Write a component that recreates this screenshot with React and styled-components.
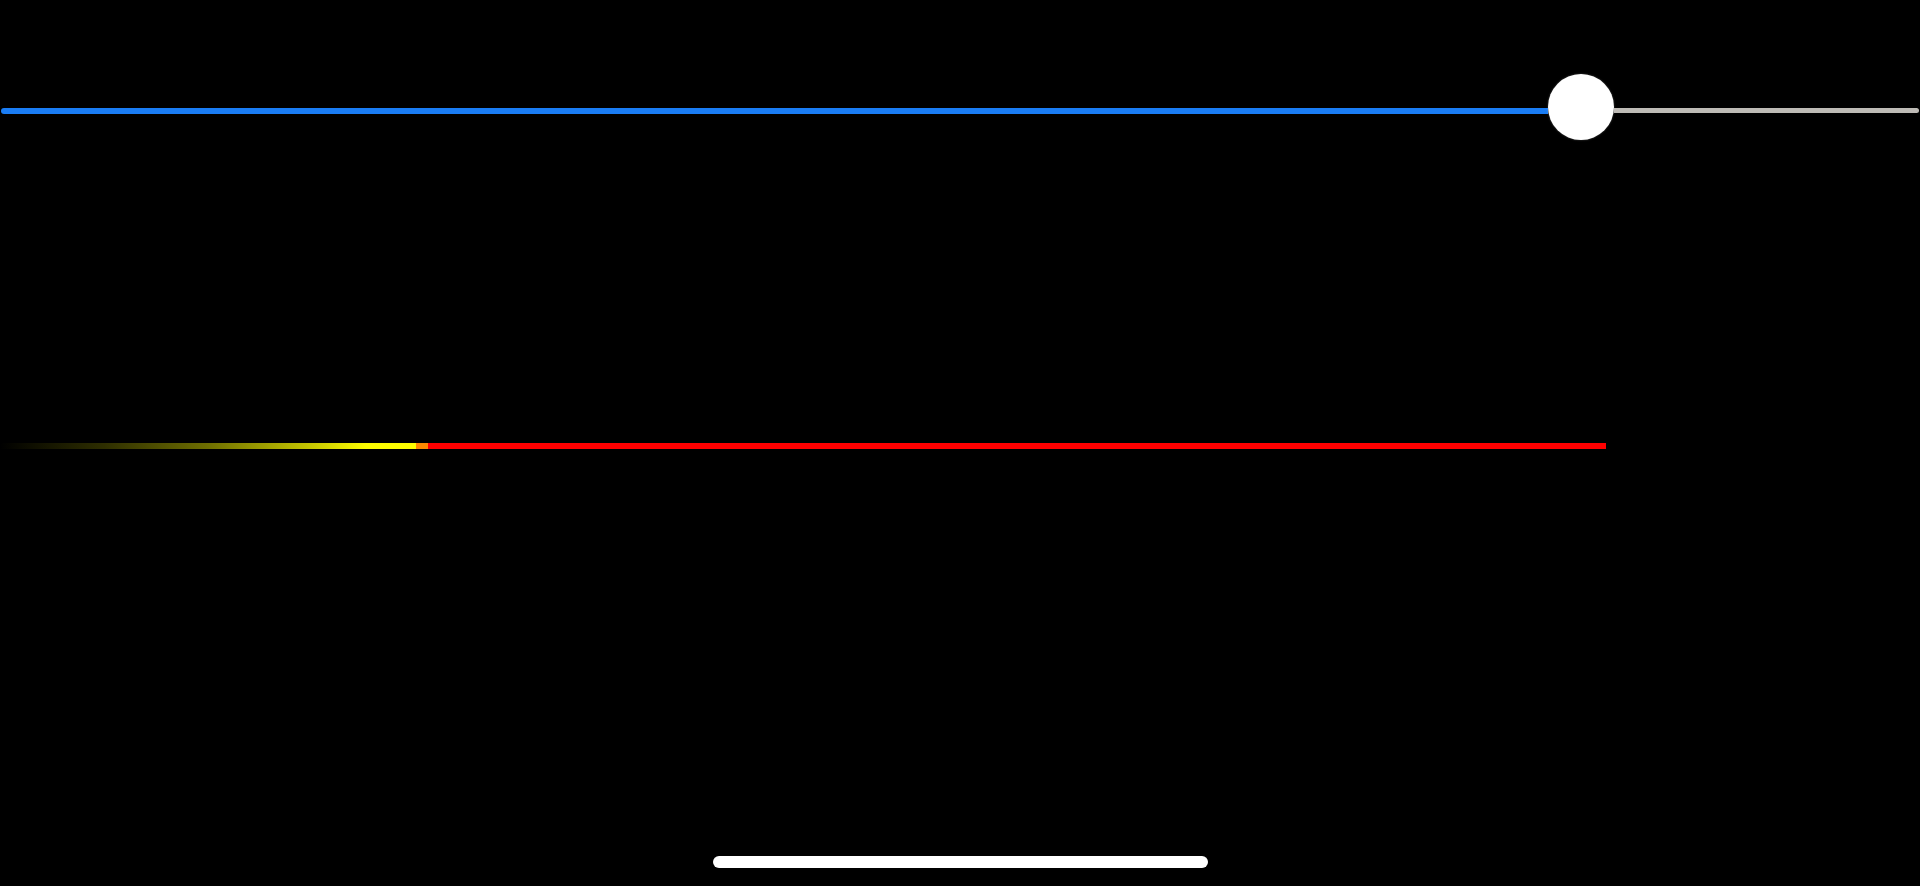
import React from 'react';
import styled, { createGlobalStyle } from 'styled-components';

const GlobalStyle = createGlobalStyle`
  html, body {
    margin: 0;
    padding: 0;
    background: #000000;
    font-family: 'Liberation Sans', Arial, sans-serif;
  }
`;

const s = {
  Page: styled.div`
    display: flex;
    flex-direction: column;
    height: 886px;
    width: 1920px;
    padding: 74px 0 18px;
    box-sizing: border-box;
    background: #000000;
    overflow: hidden;
  `,
  SliderRow: styled.div`
    display: flex;
    align-items: flex-start;
    height: 67px;
    padding-left: 1px;
    padding-right: 1px;
  `,
  Filled: styled.div`
    height: 6px;
    margin-top: 34px;
    background: #1a7df5;
    border-radius: 3px 0 0 3px;
    flex-shrink: 0;
  `,
  Thumb: styled.div`
    width: 66px;
    height: 66px;
    border-radius: 50%;
    background: #ffffff;
    flex-shrink: 0;
    box-shadow: 0 0 2px rgba(255, 255, 255, 0.3);
  `,
  Remaining: styled.div`
    flex: 1;
    height: 5px;
    margin-top: 34px;
    background: #bebbb6;
    border-radius: 0 3px 3px 0;
  `,
  Meter: styled.div`
    display: flex;
    width: 1606px;
    height: 6px;
    margin-top: 302px;
  `,
  Glow: styled.div`
    width: 416px;
    height: 100%;
    background: linear-gradient(
      to right,
      rgba(60, 60, 0, 0) 0%,
      #2e2e00 25%,
      #6e6e00 50%,
      #c8c800 75%,
      #fdfd00 88%,
      #ffff00 100%
    );
  `,
  Peak: styled.div`
    width: 12px;
    height: 100%;
    background: #ff8a00;
  `,
  Level: styled.div`
    flex: 1;
    height: 100%;
    background: #ff0000;
  `,
  HomeIndicator: styled.div`
    width: 495px;
    height: 12px;
    margin-top: auto;
    margin-left: 713px;
    border-radius: 6px;
    background: #ffffff;
  `,
};

const App = () => {
  const value = 1547;

  return (
    <>
      <GlobalStyle />
      <s.Page>
        <s.SliderRow>
          <s.Filled style={{ width: `${value}px` }} />
          <s.Thumb />
          <s.Remaining />
        </s.SliderRow>
        <s.Meter>
          <s.Glow />
          <s.Peak />
          <s.Level />
        </s.Meter>
        <s.HomeIndicator />
      </s.Page>
    </>
  );
};

export default App;
